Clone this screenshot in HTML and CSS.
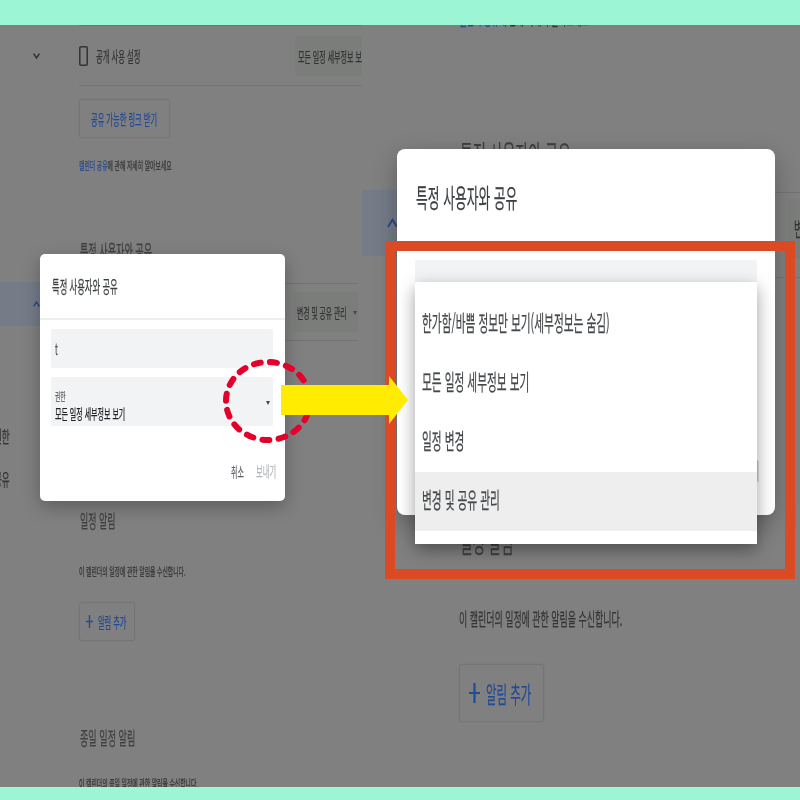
FILE: index.html
```html
<!DOCTYPE html>
<html lang="ko">
<head>
<meta charset="utf-8">
<title>특정 사용자와 공유</title>
<link rel="stylesheet" href="styles.css">
</head>
<body>
<div class="band band-top"></div>
<main class="stage">
  <section class="panel panel-a">
    <div class="gutter">
      <div class="gutter-chev">
        <svg class="chev" viewBox="0 0 7 6"><polyline points="0.6,0.6 3.5,5 6.4,0.6" fill="none" stroke="#2e2e2e" stroke-width="1.4"/></svg>
      </div>
      <div class="nav-active">
        <svg class="chev" viewBox="0 0 7 6"><polyline points="0.6,5.4 3.5,1 6.4,5.4" fill="none" stroke="#27488c" stroke-width="1.4"/></svg>
      </div>
      <div class="clip-line clip-first"><span class="sq">권한</span></div>
      <div class="clip-line clip-second"><span class="sq">공유</span></div>
    </div>
    <div class="main">
      <div class="row row-public">
        <svg class="phone" viewBox="0 0 9 20"><rect x="0.8" y="0.8" width="7.4" height="18.4" rx="1.2" fill="none" stroke="#333" stroke-width="1.5"/></svg>
        <span class="sq row-label">공개 사용 설정</span>
        <div class="select select-public"><span class="sq">모든 일정 세부정보 보기</span></div>
      </div>
      <div class="btn btn-link"><span class="sq">공유 가능한 링크 받기</span></div>
      <p class="helper"><span class="sq"><span class="blue">캘린더 공유</span>에 관해 자세히 알아보세요</span></p>
      <h2 class="heading heading-share"><span class="sq">특정 사용자와 공유</span></h2>
      <div class="row row-user">
        <div class="select select-user"><span class="sq">변경 및 공유 관리</span><span class="caret">▾</span></div>
      </div>
      <h2 class="heading heading-event"><span class="sq">일정 알림</span></h2>
      <p class="helper helper-event"><span class="sq">이 캘린더의 일정에 관한 알림을 수신합니다.</span></p>
      <div class="btn btn-add">
        <svg class="plus" viewBox="0 0 7 13" preserveAspectRatio="none"><path d="M3.5 0V13M0 6.5H7" stroke="#234a94" stroke-width="1.4" fill="none"/></svg>
        <span class="sq">알림 추가</span>
      </div>
      <h2 class="heading heading-allday"><span class="sq">종일 일정 알림</span></h2>
      <p class="helper helper-allday"><span class="sq">이 캘린더의 종일 일정에 관한 알림을 수신합니다.</span></p>
    </div>
    <div class="modal">
      <div class="modal-title"><span class="sq">특정 사용자와 공유</span></div>
      <div class="field field-input"><span class="sq">t</span></div>
      <div class="field field-select">
        <div class="field-text">
          <span class="sq field-label">권한</span>
          <span class="sq field-value">모든 일정 세부정보 보기</span>
        </div>
        <span class="caret">▾</span>
      </div>
      <div class="actions">
        <span class="act act-cancel"><span class="sq">취소</span></span>
        <span class="act act-send"><span class="sq">보내기</span></span>
      </div>
    </div>
  </section>

  <section class="panel panel-b">
    <div class="gutter">
      <div class="nav-active">
        <svg class="chev" viewBox="0 0 7 6" preserveAspectRatio="none"><polyline points="0.6,5.4 3.5,1 6.4,5.4" fill="none" stroke="#27488c" stroke-width="1.2"/></svg>
      </div>
    </div>
    <div class="main">
      <p class="helper helper-cut"><span class="sq"><span class="blue">캘린더 공유</span>에 관해 자세히 알아보세요</span></p>
      <h2 class="heading heading-share"><span class="sq">특정 사용자와 공유</span></h2>
      <div class="row row-user">
        <div class="select select-user"><span class="sq">변경 및 공유 관리</span></div>
      </div>
      <h2 class="heading heading-event"><span class="sq">일정 알림</span></h2>
      <p class="helper helper-event"><span class="sq">이 캘린더의 일정에 관한 알림을 수신합니다.</span></p>
      <div class="btn btn-add">
        <svg class="plus" viewBox="0 0 7 13" preserveAspectRatio="none"><path d="M3.5 0V13M0 6.5H7" stroke="#234a94" stroke-width="1.4" fill="none"/></svg>
        <span class="sq">알림 추가</span>
      </div>
    </div>
    <div class="modal">
      <div class="modal-title"><span class="sq">특정 사용자와 공유</span></div>
      <div class="field field-input"><span class="sq">t</span></div>
      <div class="field field-select"></div>
      <div class="actions">
        <span class="act act-cancel"><span class="sq">취소</span></span>
        <span class="act act-send"><span class="sq">보내기</span></span>
      </div>
      <ul class="menu">
        <li><span class="sq">한가함/바쁨 정보만 보기(세부정보는 숨김)</span></li>
        <li><span class="sq">모든 일정 세부정보 보기</span></li>
        <li><span class="sq">일정 변경</span></li>
        <li class="menu-on"><span class="sq">변경 및 공유 관리</span></li>
      </ul>
    </div>
  </section>

  <div class="frame"></div>
  <svg class="ring" viewBox="0 0 94 88"><ellipse cx="47" cy="44" rx="42" ry="39" fill="none" stroke="#e4002b" stroke-width="6" stroke-linecap="round" stroke-dasharray="7 9.3" stroke-dashoffset="3"/></svg>
  <svg class="arrow" viewBox="0 0 127 48"><polygon points="0,9 108,9 108,0 127,24 108,48 108,39 0,39" fill="#ffec00"/></svg>
</main>
<div class="band band-bottom"></div>
</body>
</html>
```
FILE: styles.css
```css
* { box-sizing: border-box; }
html, body { margin: 0; padding: 0; }
body {
  width: 800px;
  height: 800px;
  overflow: hidden;
  display: flex;
  flex-direction: column;
  background: #9cf6d5;
  font-family: "Noto Sans CJK KR", "Noto Sans", sans-serif;
  color: #333434;
}
.band { background: #9cf6d5; flex: none; }
.band-top { height: 25px; }
.band-bottom { height: 13px; }
.stage { position: relative; display: flex; height: 762px; flex: none; overflow: hidden; }
.panel { position: relative; display: flex; height: 762px; overflow: hidden; background: #808080; filter: blur(0.4px); flex: none; }
.panel-a { width: 362px; }
.panel-b { width: 438px; }
.sq { display: inline-block; white-space: nowrap; transform: scaleX(0.5); transform-origin: 0 50%; -webkit-text-stroke: 0.25px currentColor; }
.blue { color: #27488c; }
h2, p, ul { margin: 0; padding: 0; font-weight: 400; }

/* gutters */
.gutter { flex: none; display: flex; flex-direction: column; }
.panel-a .gutter { width: 79px; }
.panel-b .gutter { width: 97px; }
.gutter-chev { height: 60px; padding: 28px 0 0 33px; }
.chev { display: block; width: 7px; height: 6px; }
.nav-active { background: #757c88; flex: none; }
.panel-a .nav-active { height: 44px; margin-top: 197px; padding: 19px 0 0 33px; }
.panel-b .nav-active { height: 66px; margin-top: 165px; padding: 28px 0 0 25px; }
.panel-b .chev { width: 11px; height: 10px; }
.clip-line { height: 20px; line-height: 20px; font-size: 17px; margin-left: -6px; white-space: nowrap; }
.clip-first { margin-top: 100px; }
.clip-second { margin-top: 23px; }

/* main column */
.main { flex: 1; min-width: 0; display: flex; flex-direction: column; align-items: flex-start; }
.row { width: 100%; display: flex; align-items: center; border-bottom: 1px solid #737373; flex: none; }
.row-public { height: 61px; border-top: 1px solid #737373; }
.phone { width: 9px; height: 20px; flex: none; }
.row-label { font-size: 14.6px; margin-left: 8px; width: 199px; flex: none; }
.select { background: #7b7d7b; border-radius: 3px; overflow: hidden; display: flex; align-items: center; flex: none; }
.select-public { width: 67px; height: 40px; padding-left: 3px; font-size: 14px; }
.panel-a .row-user { height: 58px; width: 279px; border-top: 1px solid #737373; margin-top: 23px; justify-content: flex-end; }
.select-user { width: 65px; height: 40px; padding-left: 4px; font-size: 13.6px; position: relative; }
.caret { font-size: 8px; color: #4a4a4a; }
.select-user .caret { position: absolute; right: 1px; top: 14px; }

.btn { border: 1px solid #757575; border-radius: 3px; color: #234a94; display: flex; align-items: center; flex: none; box-shadow: 0 0 1px rgba(0,0,0,.2); }
.btn-link { width: 91px; height: 39px; margin-top: 13px; padding-left: 11px; font-size: 14.5px; }
.helper { font-size: 11.7px; line-height: 14px; flex: none; white-space: nowrap; }
.panel-a .main > .helper:nth-of-type(1) { margin-top: 20px; }
.heading { font-size: 18.2px; line-height: 20px; color: #3f4040; flex: none; white-space: nowrap; }
.heading-share { margin-top: 68px; margin-left: 1px; }
.heading-event { margin-top: 169px; margin-left: 1px; font-size: 18px; }
.helper-event { margin-top: 34px; }
.btn-add { width: 56px; height: 39px; margin-top: 24px; padding-left: 6px; font-size: 14.4px; }
.plus { width: 7px; height: 13px; flex: none; margin-right: 5px; }
.heading-allday { margin-top: 86px; margin-left: 1px; }
.helper-allday { margin-top: 29px; }

/* right panel scale */
.panel-b .helper { font-size: 17.9px; line-height: 22px; }
.panel-b .helper-cut { margin-top: -18px; font-size: 16.4px; }
.panel-b .heading { font-size: 28px; line-height: 34px; }
.panel-b .heading-share { margin-top: 108px; }
.panel-b .row-user { height: 86px; width: 100%; border-top: 1px solid #737373; margin-top: 21px; padding: 0 0 13px 329px; }
.panel-b .select-user { width: 40px; height: 60px; font-size: 20px; padding-left: 6px; }
.panel-b .heading-event { margin-top: 247px; font-size: 27px; }
.panel-b .helper-event { margin-top: 48px; }
.panel-b .btn-add { width: 85px; height: 58px; margin-top: 35px; padding-left: 9px; font-size: 22.8px; }
.panel-b .plus { width: 11px; height: 20px; margin-right: 6px; }

/* dialogs */
.modal { position: absolute; background: #fff; display: flex; flex-direction: column; color: #3c4043; }
.panel-a .modal { left: 40px; top: 229px; width: 245px; height: 247px; border-radius: 5px; box-shadow: 0 6px 18px rgba(0,0,0,.28); }
.panel-b .modal { left: 35px; top: 124px; width: 378px; height: 366px; border-radius: 8px; box-shadow: 0 8px 24px rgba(0,0,0,.28); }
.modal-title { flex: none; display: flex; align-items: center; border-bottom: 2px solid #eee; }
.panel-a .modal-title { height: 66px; padding-left: 12px; font-size: 16.6px; }
.panel-b .modal-title { height: 97px; padding-left: 19px; font-size: 25.6px; }
.field { background: #f1f3f4; border-radius: 2px; flex: none; display: flex; align-items: center; }
.panel-a .field { margin: 9px 12px 0 11px; }
.panel-a .field-input { height: 39px; padding-left: 4px; font-size: 15px; color: #555; }
.panel-a .field-select { height: 49px; padding: 0 3px 0 4px; justify-content: space-between; }
.field-text { display: flex; flex-direction: column; padding-top: 7px; }
.field-label { font-size: 11.5px; line-height: 16px; color: #5f6368; }
.field-value { font-size: 14px; line-height: 18px; color: #202124; }
.panel-b .field { margin: 14px 18px 0 18px; }
.panel-b .field-input { height: 58px; padding-left: 6px; font-size: 20px; color: #555; }
.panel-b .field-select { height: 72px; }
.actions { margin-top: auto; display: flex; justify-content: flex-end; flex: none; }
.panel-a .actions { padding-bottom: 20px; font-size: 14px; line-height: 20px; }
.panel-b .actions { padding-bottom: 30px; font-size: 21.5px; line-height: 30px; }
.act { display: block; flex: none; color: #5f6368; }
.panel-a .act-cancel { width: 25px; }
.panel-a .act-send { width: 29px; font-size: 14.6px; color: #b5b7ba; }
.panel-b .act-cancel { width: 38px; }
.panel-b .act-send { width: 45px; color: #b5b7ba; }
.menu { position: absolute; left: 18px; top: 133px; width: 342px; height: 262px; padding: 13px 0; list-style: none; background: #fff; box-shadow: 0 6px 16px rgba(0,0,0,.38); }
.menu li { height: 59px; display: flex; align-items: center; padding-left: 7px; font-size: 21.4px; color: #45484b; }
.menu li .sq { position: relative; top: -3px; }
.menu .menu-on { background: #eee; }

/* annotations */
.frame { position: absolute; left: 385px; top: 216px; width: 410px; height: 338px; border: 10px solid #db4a23; }
.ring { position: absolute; left: 221px; top: 332px; width: 94px; height: 88px; }
.arrow { position: absolute; left: 281px; top: 351px; width: 127px; height: 48px; }
```
